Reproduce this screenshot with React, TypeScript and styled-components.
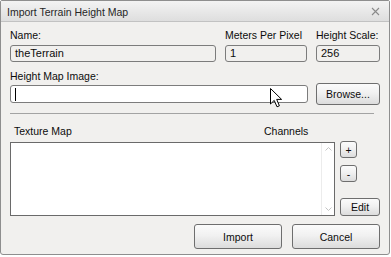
import React from 'react';
import styled, { createGlobalStyle } from 'styled-components';

const GlobalStyle = createGlobalStyle`
  html, body {
    margin: 0;
    background: #ffffff;
  }
  body {
    font-family: "Liberation Sans", Arial, sans-serif;
    font-size: 10.5px;
    color: #0c0c0c;
  }
`;

export default function App() {
  return (
    <>
      <GlobalStyle />
      <S.Window>
        <S.TitleBar>
          <S.Title>Import Terrain Height Map</S.Title>
          <S.Close width="9" height="9" viewBox="0 0 9 9">
            <path d="M1 1 L8 8 M8 1 L1 8" stroke="#8a8a8a" strokeWidth="1.1" />
          </S.Close>
        </S.TitleBar>

        <S.Body>
          <S.FieldRow>
            <S.Field>
              <S.Label>Name:</S.Label>
              <S.TextBox>theTerrain</S.TextBox>
            </S.Field>
            <S.Field>
              <S.Label>Meters Per Pixel</S.Label>
              <S.TextBox>1</S.TextBox>
            </S.Field>
            <S.Field>
              <S.Label>Height Scale:</S.Label>
              <S.TextBox>256</S.TextBox>
            </S.Field>
          </S.FieldRow>

          <S.Label $top={8}>Height Map Image:</S.Label>
          <S.BrowseRow>
            <S.TextBox $white $width={298} $height={18}>
              <S.Caret />
            </S.TextBox>
            <S.Button $width={64} $height={22}>Browse...</S.Button>
            <S.Pointer width="13" height="20" viewBox="0 0 13 20">
              <path
                d="M0.5 0.5 L0.5 16 L4.2 12.4 L7 18.8 L9.4 17.8 L6.7 11.4 L11.6 11.4 Z"
                fill="#ffffff"
                stroke="#000000"
                strokeWidth="1"
                strokeLinejoin="round"
              />
            </S.Pointer>
          </S.BrowseRow>

          <S.Separator />

          <S.ListHeader>
            <S.TextureLabel>Texture Map</S.TextureLabel>
            <span>Channels</span>
          </S.ListHeader>

          <S.ListRow>
            <S.ListBox>
              <S.ScrollBar>
                <svg width="7" height="4" viewBox="0 0 7 4">
                  <path d="M0.5 3.5 L3.5 0.5 L6.5 3.5" fill="none" stroke="#c4c4c4" />
                </svg>
                <svg width="7" height="4" viewBox="0 0 7 4">
                  <path d="M0.5 0.5 L3.5 3.5 L6.5 0.5" fill="none" stroke="#c4c4c4" />
                </svg>
              </S.ScrollBar>
            </S.ListBox>
            <S.SideButtons>
              <S.Button $width={17} $height={17}>+</S.Button>
              <S.Button $width={17} $height={17}>-</S.Button>
              <S.EditButton $width={40} $height={18}>Edit</S.EditButton>
            </S.SideButtons>
          </S.ListRow>

          <S.Footer>
            <S.Button $width={88} $height={25}>Import</S.Button>
            <S.Button $width={88} $height={25}>Cancel</S.Button>
          </S.Footer>
        </S.Body>
      </S.Window>
    </>
  );
}

const S = {
  Window: styled.div`
    box-sizing: border-box;
    width: 390px;
    height: 255px;
    border: 1px solid #8e8e8e;
    border-radius: 2px 2px 3px 3px;
    background: #f1f0ee;
    display: flex;
    flex-direction: column;
  `,
  TitleBar: styled.div`
    height: 20px;
    display: flex;
    align-items: center;
    justify-content: space-between;
    padding: 0 9px 0 6px;
    background: linear-gradient(#f3f3f3, #dedede);
    border-bottom: 1px solid #c2c2c2;
  `,
  Title: styled.span`
    font-size: 10.5px;
    color: #262626;
    padding-top: 1px;
  `,
  Close: styled.svg`
    display: block;
  `,
  Body: styled.div`
    display: flex;
    flex-direction: column;
    padding: 7px 9px 5px 9px;
  `,
  FieldRow: styled.div`
    display: grid;
    grid-template-columns: 206px 82px 64px;
    column-gap: 9px;
  `,
  Field: styled.div`
    display: flex;
    flex-direction: column;
    gap: 3px;
  `,
  Label: styled.div<{ $top?: number }>`
    line-height: 13px;
    white-space: nowrap;
    margin-top: ${(p) => p.$top ?? 0}px;
  `,
  TextBox: styled.div<{ $white?: boolean; $width?: number; $height?: number }>`
    box-sizing: border-box;
    position: relative;
    width: ${(p) => (p.$width ? `${p.$width}px` : '100%')};
    height: ${(p) => p.$height ?? 17}px;
    border: 1px solid #7c7c7c;
    border-radius: 3px;
    background: ${(p) => (p.$white ? '#ffffff' : '#f1f0ee')};
    padding: 0 4px;
    display: flex;
    align-items: center;
    line-height: 13px;
    font-size: 11px;
  `,
  Caret: styled.span`
    width: 1px;
    height: 13px;
    background: #000000;
  `,
  BrowseRow: styled.div`
    position: relative;
    display: flex;
    align-items: center;
    justify-content: space-between;
  `,
  Pointer: styled.svg`
    position: absolute;
    left: 260px;
    top: 5px;
  `,
  Button: styled.div<{ $width: number; $height: number }>`
    box-sizing: border-box;
    width: ${(p) => p.$width}px;
    height: ${(p) => p.$height}px;
    border: 1px solid #6e6e6e;
    border-radius: 3px;
    background: linear-gradient(#fbfbfb, #f1f1f1 45%, #dcdcdc);
    display: flex;
    align-items: center;
    justify-content: center;
    font-size: 10.5px;
    white-space: nowrap;
  `,
  EditButton: styled.div<{ $width: number; $height: number }>`
    box-sizing: border-box;
    width: ${(p) => p.$width}px;
    height: ${(p) => p.$height}px;
    margin-top: auto;
    border: 1px solid #6e6e6e;
    border-radius: 3px;
    background: linear-gradient(#fbfbfb, #f1f1f1 45%, #dcdcdc);
    display: flex;
    align-items: center;
    justify-content: center;
    font-size: 10.5px;
  `,
  Separator: styled.div`
    height: 1px;
    margin: 8px 6px 0 0;
    background: #a3a3a3;
  `,
  ListHeader: styled.div`
    display: flex;
    margin-top: 11px;
    line-height: 13px;
  `,
  TextureLabel: styled.span`
    width: 250px;
    padding-left: 4px;
  `,
  ListRow: styled.div`
    display: flex;
    gap: 5px;
    margin-top: 4px;
  `,
  ListBox: styled.div`
    box-sizing: border-box;
    width: 326px;
    height: 74px;
    border: 1px solid #6a6a6a;
    background: #ffffff;
    display: flex;
    justify-content: flex-end;
  `,
  ScrollBar: styled.div`
    width: 12px;
    border-left: 1px solid #ececec;
    display: flex;
    flex-direction: column;
    align-items: center;
    justify-content: space-between;
    padding: 4px 0 4px;
  `,
  SideButtons: styled.div`
    display: flex;
    flex-direction: column;
    gap: 7px;
    margin-top: -1px;
  `,
  Footer: styled.div`
    display: flex;
    justify-content: flex-end;
    gap: 10px;
    margin-top: 8px;
  `,
};
